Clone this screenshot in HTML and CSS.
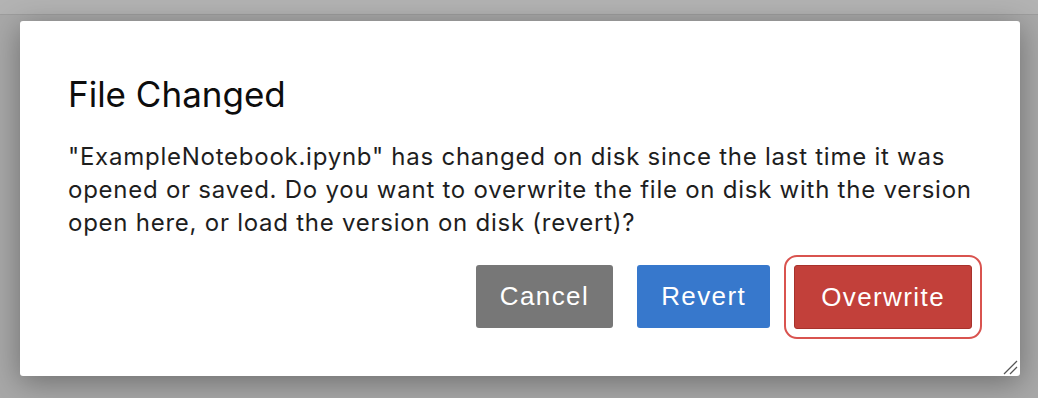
FILE: index.html
```html
<!DOCTYPE html>
<html lang="en">
<head>
    <meta charset="UTF-8">
    <meta name="viewport" content="width=device-width, initial-scale=1.0">
    <title>File Changed</title>
    <link rel="stylesheet" href="styles.css">
</head>
<body>
    <div class="topbar"></div>
    <div class="dialog">
        <h2 class="dialog-title">File Changed</h2>
        <p class="dialog-text">"ExampleNotebook.ipynb" has changed on disk since the last time it was opened or saved. Do you want to overwrite the file on disk with the version open here, or load the version on disk (revert)?</p>
        <div class="dialog-buttons">
            <button class="btn btn-cancel">Cancel</button>
            <button class="btn btn-revert">Revert</button>
            <button class="btn btn-overwrite">Overwrite</button>
        </div>
        <svg class="resize-grip" width="16" height="16" viewBox="0 0 16 16">
            <line x1="2" y1="15" x2="15" y2="2" stroke="#555" stroke-width="1.2"/>
            <line x1="8" y1="15" x2="15" y2="8" stroke="#555" stroke-width="1.2"/>
        </svg>
    </div>
</body>
</html>
```

FILE: styles.css
```css
body {
    margin: 0;
    background-color: #a8a8a8;
    height: 398px;
    overflow: hidden;
    font-family: Inter, "Noto Sans", sans-serif;
}

.topbar {
    height: 14px;
    background-color: #b3b3b3;
    border-bottom: 1px solid #9d9d9d;
}

.dialog {
    position: relative;
    box-sizing: border-box;
    width: 1000px;
    height: 355px;
    margin: 6px 0 0 20px;
    padding: 52px 48px 47px 48px;
    background-color: #ffffff;
    border-radius: 3px;
    box-shadow: 0 6px 30px rgba(0, 0, 0, 0.35);
}

.dialog-title {
    margin: 0;
    font-size: 35px;
    line-height: 42px;
    font-weight: 400;
    color: #0d0d0d;
}

.dialog-text {
    margin: 25px 0 26px 0;
    font-size: 24px;
    line-height: 33px;
    letter-spacing: 0.75px;
    color: #1e1e1e;
}

.dialog-buttons {
    display: flex;
    justify-content: flex-end;
    gap: 24px;
}

.btn {
    height: 63px;
    padding: 0 24px;
    border: none;
    border-radius: 3px;
    font-family: "Liberation Sans", Arial, sans-serif;
    font-size: 26px;
    letter-spacing: 1.4px;
    color: #ffffff;
}

.btn-cancel {
    background-color: #777777;
}

.btn-revert {
    background-color: #3778cc;
}

.btn-overwrite {
    height: 64px;
    padding: 0 26px;
    background-color: #c2403a;
    border: 1px solid #a8322c;
    outline: 2px solid #d9534f;
    outline-offset: 8px;
}

.resize-grip {
    position: absolute;
    right: 2px;
    bottom: 1px;
}
```
